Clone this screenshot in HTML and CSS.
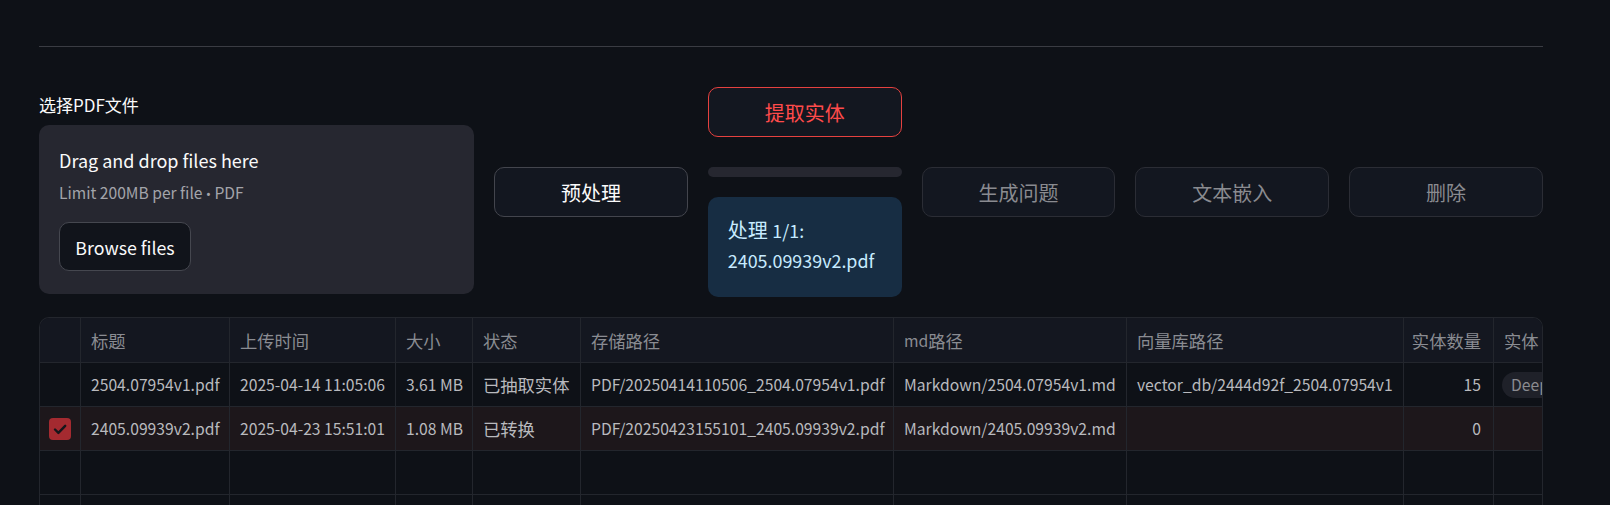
FILE: index.html
```html
<!DOCTYPE html>
<html lang="zh">
<head>
<meta charset="utf-8">
<title>PDF</title>
<link rel="stylesheet" href="styles.css">
</head>
<body>
<main class="page">
  <hr class="divider">
  <section class="controls">
    <div class="uploader">
      <div class="label">选择PDF文件</div>
      <div class="dropzone">
        <div class="dz-title">Drag and drop files here</div>
        <div class="dz-sub">Limit 200MB per file <span class="bullet">•</span> PDF</div>
        <button class="btn browse">Browse files</button>
      </div>
    </div>
    <div class="cell-col"><button class="btn">预处理</button></div>
    <div class="cell-col stack">
      <button class="btn danger">提取实体</button>
      <div class="progress"></div>
      <div class="info">处理 <span class="lat">1/1: 2405.09939v2.pdf</span></div>
    </div>
    <div class="cell-col"><button class="btn disabled">生成问题</button></div>
    <div class="cell-col"><button class="btn disabled">文本嵌入</button></div>
    <div class="cell-col"><button class="btn disabled">删除</button></div>
  </section>

  <div class="table-wrap">
    <div class="row head">
      <div class="c"></div>
      <div class="c">标题</div>
      <div class="c">上传时间</div>
      <div class="c">大小</div>
      <div class="c">状态</div>
      <div class="c">存储路径</div>
      <div class="c"><span class="lat">md</span>路径</div>
      <div class="c">向量库路径</div>
      <div class="c num">实体数量</div>
      <div class="c">实体</div>
    </div>
    <div class="row">
      <div class="c"></div>
      <div class="c lat">2504.07954v1.pdf</div>
      <div class="c lat">2025-04-14 11:05:06</div>
      <div class="c lat">3.61 MB</div>
      <div class="c">已抽取实体</div>
      <div class="c lat">PDF/20250414110506_2504.07954v1.pdf</div>
      <div class="c lat">Markdown/2504.07954v1.md</div>
      <div class="c lat">vector_db/2444d92f_2504.07954v1</div>
      <div class="c num lat">15</div>
      <div class="c lat"><span class="pill">DeepSeek</span></div>
    </div>
    <div class="row selected">
      <div class="c mark"><span class="check"><svg viewBox="0 0 22 22" width="22" height="22"><path d="M6 11.5l3.4 3.4L16.2 7.8" fill="none" stroke="#15161b" stroke-width="2.4" stroke-linecap="round" stroke-linejoin="round"/></svg></span></div>
      <div class="c lat">2405.09939v2.pdf</div>
      <div class="c lat">2025-04-23 15:51:01</div>
      <div class="c lat">1.08 MB</div>
      <div class="c">已转换</div>
      <div class="c lat">PDF/20250423155101_2405.09939v2.pdf</div>
      <div class="c lat">Markdown/2405.09939v2.md</div>
      <div class="c"></div>
      <div class="c num lat">0</div>
      <div class="c"></div>
    </div>
    <div class="row">
      <div class="c"></div><div class="c"></div><div class="c"></div><div class="c"></div><div class="c"></div>
      <div class="c"></div><div class="c"></div><div class="c"></div><div class="c"></div><div class="c"></div>
    </div>
    <div class="row">
      <div class="c"></div><div class="c"></div><div class="c"></div><div class="c"></div><div class="c"></div>
      <div class="c"></div><div class="c"></div><div class="c"></div><div class="c"></div><div class="c"></div>
    </div>
  </div>
</main>
</body>
</html>
```

FILE: styles.css
```css
* { box-sizing: border-box; }

html, body {
  margin: 0;
  background: #0e1117;
}

body {
  font-family: "Noto Sans CJK SC", "Noto Sans", sans-serif;
  color: #fafafa;
  overflow: hidden;
}

.page {
  width: 1504px;
  margin-left: 39px;
}

.divider {
  margin: 46px 0 0;
  border: 0;
  border-top: 1px solid #3a3c43;
  height: 0;
}

.controls {
  display: grid;
  grid-template-columns: 435px repeat(5, minmax(0, 1fr));
  column-gap: 20px;
  align-items: center;
  margin-top: 40px;
}

.label {
  font-size: 17px;
  line-height: 30px;
  margin-bottom: 5px;
  color: #fafafa;
}

.dropzone {
  background: #262730;
  border-radius: 10px;
  padding: 19px 20px 20px;
  height: 169px;
}

.dz-title {
  font-size: 18px;
  line-height: 32px;
  color: #fafafa;
}

.dz-sub {
  font-size: 15.6px;
  line-height: 32px;
  color: #a3a4aa;
}

.bullet {
  font-family: "Noto Sans", sans-serif;
  font-size: 13px;
}

.btn {
  display: flex;
  align-items: center;
  justify-content: center;
  width: 100%;
  height: 50px;
  border: 1px solid #43454d;
  border-radius: 10px;
  background: #131720;
  color: #fafafa;
  font-family: inherit;
  font-size: 20px;
  padding: 0;
}

.btn.browse {
  width: 132px;
  height: 49px;
  margin-top: 12px;
  font-size: 17.8px;
  background: #11141b;
  border-color: #45474f;
}

.btn.danger {
  border-color: #e5413f;
  color: #ff4b4b;
}

.btn.disabled {
  border-color: #2b2d35;
  color: #8a8b90;
}

.stack {
  display: flex;
  flex-direction: column;
}

.progress {
  height: 10px;
  margin-top: 30px;
  border-radius: 5px;
  background: #262730;
}

.info {
  margin-top: 20px;
  height: 100px;
  padding: 18px 20px;
  border-radius: 10px;
  background: #172d43;
  color: #c7ebff;
  font-size: 20px;
  line-height: 30px;
}

.info .lat {
  font-size: 17.9px;
}

.table-wrap {
  margin-top: 20px;
  border: 1px solid #23262d;
  border-bottom: 0;
  border-radius: 10px 10px 0 0;
  overflow: hidden;
  height: 200px;
}

.row {
  display: grid;
  grid-template-columns: 41px 149px 166px 77px 108px 313px 233px 277px 90px 140px;
  height: 44px;
  border-bottom: 1px solid #23262d;
  background: #0e1117;
}

.row.head {
  height: 45px;
  background: #141720;
}

.row.selected {
  background: #1d171b;
}

.c {
  display: flex;
  align-items: center;
  padding: 0 10px;
  border-right: 1px solid #23262d;
  font-size: 17.3px;
  color: #b9babe;
  white-space: nowrap;
  overflow: hidden;
}

.c.lat, .head .lat {
  font-size: 15.7px;
}

.head .c {
  color: #8a8c92;
}

.c.num {
  justify-content: flex-end;
  padding-right: 12px;
}

.c.mark {
  justify-content: center;
  padding: 0;
}

.check {
  display: flex;
  width: 22px;
  height: 22px;
  border-radius: 4px;
  background: #a42a30;
}

.pill {
  display: inline-flex;
  align-items: center;
  height: 26px;
  padding: 0 9px;
  margin-left: -2px;
  border-radius: 13px;
  background: #1f2129;
  color: #8a8b90;
}
```
